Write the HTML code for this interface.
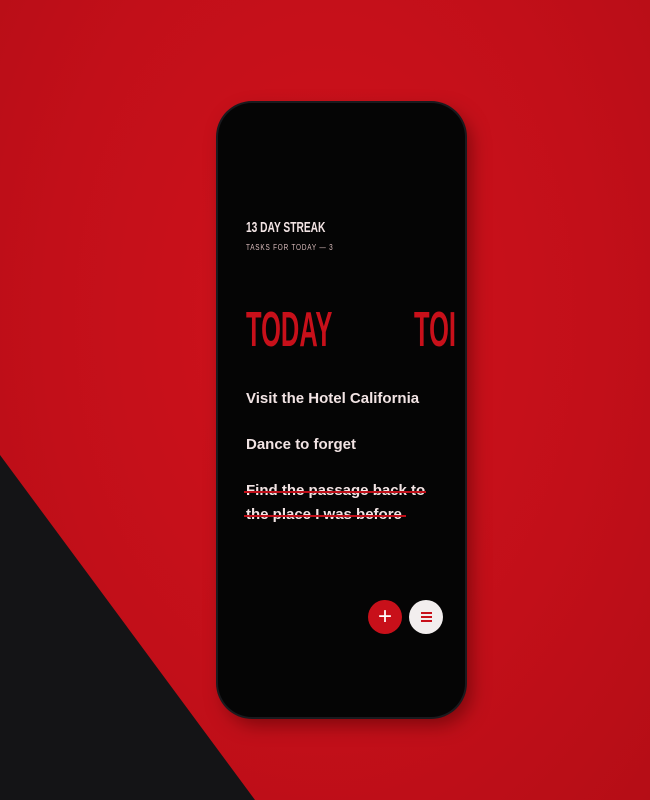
<!DOCTYPE html>
<html><head><style>
body{margin:0;width:650px;height:800px;overflow:hidden;background:#c90f1a;position:relative;font-family:"Liberation Sans",sans-serif}
.bg{position:absolute;inset:0;background:radial-gradient(ellipse at 50% 40%,#d0121c 0%,#c20f19 60%,#b50d16 100%)}
.tri{position:absolute;left:0;top:0;width:650px;height:800px}
.phone{position:absolute;left:218px;top:103px;width:247px;height:614px;border-radius:34px;background:#050505;box-shadow:0 0 0 2px #1a1a1e,6px 8px 18px rgba(60,0,0,.5);overflow:hidden}
.t{position:absolute;color:#f2e4e4;white-space:nowrap}
.c{font-family:"Liberation Sans Narrow","Liberation Sans",sans-serif;transform-origin:left top}
.task{font-weight:bold;font-size:15px;left:246px}
.strike{position:absolute;height:2px;background:#c0101a}
.btn{position:absolute;width:34px;height:34px;border-radius:50%;text-align:center}
</style></head><body>
<div class="bg"></div>
<svg class="tri"><polygon points="0,455 255,800 0,800" fill="#141416"/></svg>
<div class="phone">
<div class="t c" style="left:196px;top:199px;font-size:49px;font-weight:bold;color:#c8101a;transform:scaleX(.52)">TOI</div>
</div>
<div class="t c" style="left:246px;top:219px;font-size:15px;font-weight:bold;transform:scaleX(.68);">13 DAY STREAK</div>
<div class="t c" style="left:246px;top:243px;font-size:8px;letter-spacing:1px;color:#d9bcbc;transform:scaleX(.8)">TASKS FOR TODAY — 3</div>
<div class="t c" style="left:246px;top:302px;font-size:49px;font-weight:bold;color:#c8101a;transform:scaleX(.52)">TODAY</div>
<div class="t task" style="top:390px">Visit the Hotel California</div>
<div class="t task" style="top:436px">Dance to forget</div>
<div class="t task" style="top:482px">Find the passage back to</div>
<div class="t task" style="top:506px">the place I was before</div>
<div class="strike" style="left:244px;top:491px;width:182px"></div>
<div class="strike" style="left:244px;top:515px;width:162px"></div>
<div class="btn" style="left:368px;top:600px;background:#c8101a;color:#fff;font-size:24px;line-height:33px">+</div>
<div class="btn" style="left:409px;top:600px;background:#f2eeee">
<div style="position:absolute;left:12px;top:12px;width:11px;height:2px;background:#c8101a;box-shadow:0 4px 0 #c8101a,0 8px 0 #c8101a"></div></div>
</body></html>
